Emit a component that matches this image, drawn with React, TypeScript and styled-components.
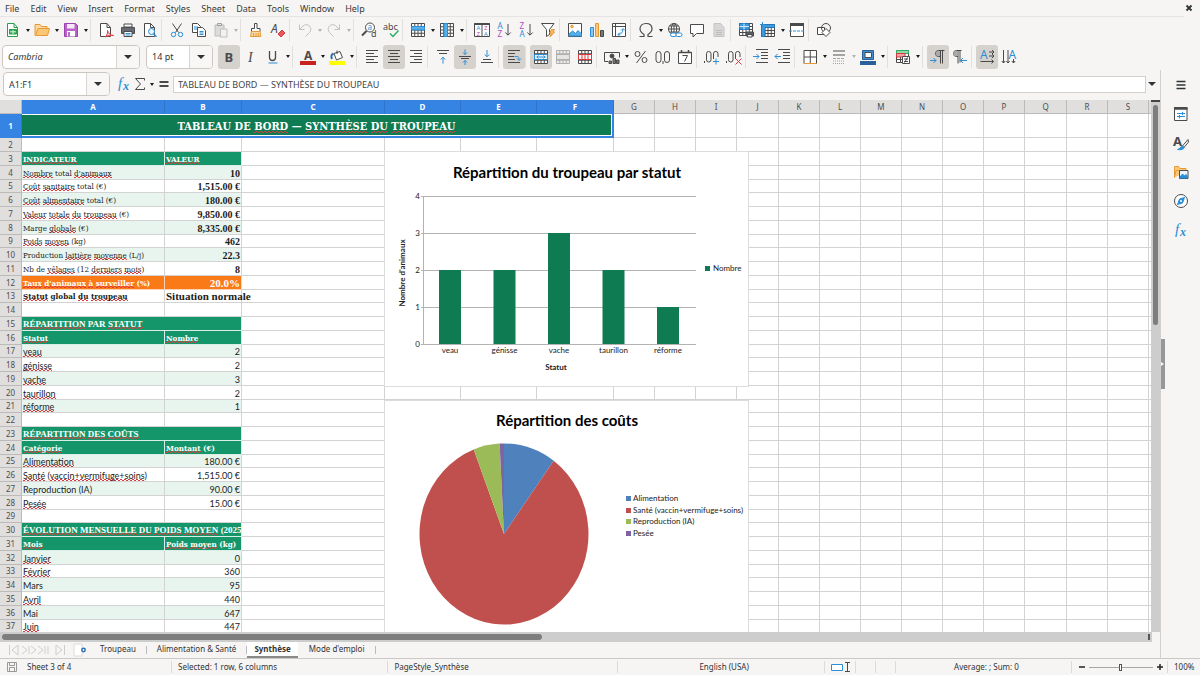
import React from "react";
import styled, { createGlobalStyle, css } from "styled-components";

const UI = `"Noto Sans", "Open Sans", sans-serif`;
const SERIF = `"DejaVu Serif Condensed", "DejaVu Serif", serif`;
const SERIF_NARROW = `"Liberation Serif", serif`;
const SANS = `Lato, "Open Sans", sans-serif`;
const INK = "#4a4a4a";
const BLUE = "#2a8fd6";
const SELECT = "#3584e4";

const GlobalStyle = createGlobalStyle`
  *, *::before, *::after { box-sizing: border-box; }
  body { margin: 0; background: #f6f5f4; font-family: ${UI}; color: #333; }
  button, input { font: inherit; color: inherit; margin: 0; }
`;

/* ---------- shell ---------- */

const Window = styled.div`
  height: 100vh;
  display: flex;
  flex-direction: column;
  overflow: hidden;
  background: #f6f5f4;
`;

const MenuBar = styled.nav`
  display: flex;
  align-items: center;
  height: 17px;
  flex: none;
  margin-right: 16px;
  border-bottom: 1px solid #e6e4e2;
`;

const MenuItem = styled.button`
  border: 0;
  background: none;
  padding: 1px 6px 0 5px;
  font-size: 9px;
  line-height: 15px;
  color: #3a3a3a;
`;

const CloseButton = styled.button`
  position: absolute;
  top: 0;
  right: 4px;
  width: 14px;
  height: 16px;
  padding: 0;
  border: 0;
  background: none;
  display: grid;
  place-items: center;
`;

const Toolbar = styled.div<{ $height: number }>`
  display: flex;
  align-items: center;
  height: ${(p) => p.$height}px;
  padding-left: 2px;
  flex: none;
`;

const Tool = styled.button<{ $on?: boolean }>`
  width: 22px;
  height: 24px;
  flex: none;
  padding: 0;
  border: 0;
  border-radius: 3px;
  display: grid;
  place-items: center;
  background: ${(p) => (p.$on ? "#d5d1cd" : "none")};
`;

const Arrow = styled.button<{ $faded?: boolean }>`
  width: 7px;
  height: 22px;
  flex: none;
  padding: 0;
  border: 0;
  background: none;
  display: grid;
  place-items: center;
  opacity: ${(p) => (p.$faded ? 0.3 : 1)};
  &::before {
    content: "";
    border: 2px solid transparent;
    border-top: 3px solid #1c1c1c;
    border-bottom: 0;
  }
`;

const Separator = styled.span`
  flex: none;
  width: 5px;
  height: 22px;
  border-left: 1px solid #e2e0dd;
  ${Arrow} + & {
    margin-left: 1px;
  }
`;

const Combo = styled.div<{ $width: number; $gap?: number }>`
  display: flex;
  flex: none;
  width: ${(p) => p.$width}px;
  height: 24px;
  margin: 0 ${(p) => p.$gap ?? 6}px 0 0;
  border: 1px solid #cdc7c2;
  border-radius: 4px;
  background: #fff;
  overflow: hidden;
`;

const ComboInput = styled.input<{ $italic?: boolean }>`
  flex: 1;
  min-width: 0;
  border: 0;
  outline: 0;
  padding: 0 5px;
  background: none;
  font-size: 9px;
  font-style: ${(p) => (p.$italic ? "italic" : "normal")};
`;

const ComboButton = styled.button`
  width: 23px;
  border: 0;
  border-left: 1px solid #d8d4d0;
  background: #f8f7f6;
  padding: 0;
  display: grid;
  place-items: center;
  &::before {
    content: "";
    border: 4px solid transparent;
    border-top-color: #2e3436;
    border-bottom: 0;
  }
`;

const Body = styled.div`
  flex: 1;
  min-height: 0;
  display: flex;
`;

const Main = styled.main`
  flex: 1;
  min-width: 0;
  display: flex;
  flex-direction: column;
  border-right: 1px solid #d2d0ce;
`;

const FormulaBar = styled.div`
  display: flex;
  align-items: center;
  height: 30px;
  flex: none;
  padding: 0 3px 2px 3px;
`;

const FormulaTool = styled.button<{ $width: number }>`
  width: ${(p) => p.$width}px;
  height: 20px;
  padding: 0;
  border: 0;
  background: none;
  display: grid;
  place-items: center;
`;

const FormulaInput = styled.input`
  flex: 1;
  min-width: 0;
  height: 17px;
  border: 1px solid #d2d0ce;
  padding: 0 4px;
  background: #fff;
  outline: 0;
  font-size: 9px;
  color: #444;
`;

const ExpandButton = styled(ComboButton)`
  width: 11px;
  border: 0;
  background: none;
`;

/* ---------- sheet ---------- */

const SheetArea = styled.div`
  flex: 1;
  min-height: 0;
  display: flex;
`;

const Canvas = styled.div`
  position: relative;
  flex: 1;
  min-width: 0;
  overflow: hidden;
  background: #fff;
`;

const Grid = styled.table`
  table-layout: fixed;
  width: 100%;
  min-width: 1152px;
  border-collapse: separate;
  border-spacing: 0;
`;

const ColHead = styled.th<{ $selected?: boolean }>`
  height: 14px;
  padding: 0;
  border-right: 1px solid ${(p) => (p.$selected ? "#2f74c8" : "#bdbbb9")};
  border-bottom: 1px solid ${(p) => (p.$selected ? SELECT : "#bdbbb9")};
  background: ${(p) => (p.$selected ? SELECT : "#e0dfde")};
  color: ${(p) => (p.$selected ? "#fff" : "#4d4d4d")};
  font-size: 8px;
  line-height: 12px;
  font-weight: ${(p) => (p.$selected ? 700 : 400)};
`;

const RowHead = styled(ColHead)`
  height: auto;
  vertical-align: middle;
`;

const Row = styled.tr`
  height: 14px;
  &:nth-child(4n + 1) {
    height: 13px;
  }
  &:first-child {
    height: 24px;
  }
`;

type Look = "serif" | "section" | "head" | "alert" | "strong" | "plain" | "amount";

const looks = {
  plain: css`
    font-family: ${SANS};
    font-size: 9px;
  `,
  serif: css`
    font-family: ${SERIF};
    font-size: 8px;
  `,
  amount: css`
    font-family: ${SERIF_NARROW};
    font-size: 10px;
    font-weight: 700;
  `,
  section: css`
    font-family: ${SERIF_NARROW};
    font-size: 9px;
    font-weight: 700;
  `,
  head: css`
    font-family: ${SERIF};
    font-size: 8px;
    font-weight: 700;
  `,
  alert: css`
    font-family: ${SERIF};
    font-size: 8px;
    font-weight: 700;
  `,
  strong: css`
    font-family: ${SERIF};
    font-size: 8px;
    font-weight: 700;
  `,
};

const Cell = styled.td<{ $look?: Look; $fill?: string; $right?: boolean; $big?: boolean; $light?: boolean; $edge?: string }>`
  padding: 1px 1px 0 1px;
  border-right: 1px solid ${(p) => p.$edge ?? "#d3d3d3"};
  border-bottom: 1px solid ${(p) => p.$edge ?? "#d3d3d3"};
  color: ${(p) => (p.$light ? "#fff" : "#1c1c1c")};
  line-height: 11px;
  vertical-align: bottom;
  white-space: nowrap;
  ${(p) => looks[p.$look ?? "plain"]}
  text-align: ${(p) => (p.$right ? "right" : "left")};
  ${(p) => p.$fill && `background: ${p.$fill};`}
  ${(p) => p.$big && "font-size: 11px;"}
  ${(p) => p.$look === "section" && "overflow: hidden;"}
`;

const TitleCell = styled.td`
  padding: 1px 1px 1px 0;
  border-right: 2px solid ${SELECT};
  border-bottom: 2px solid ${SELECT};
`;

const TitleFill = styled.div`
  height: 20px;
  background: #0f7b53;
  color: #fff;
  text-align: center;
  font-family: ${SERIF};
  font-size: 11px;
  font-weight: 700;
  line-height: 24px;
`;

/* Two-pixel-high stepped wave under a word */
const Misspelt = styled.span`
  background:
    linear-gradient(90deg, #dd3b3b 50%, transparent 50%) 0 100% / 4px 1px repeat-x,
    linear-gradient(90deg, transparent 50%, #dd3b3b 50%) 0 calc(100% - 1px) / 4px 1px repeat-x;
`;

const Floating = styled.figure<{ $top: number }>`
  position: absolute;
  left: 384px;
  top: ${(p) => p.$top}px;
  margin: 0;
  width: 365px;
  height: 236px;
  border: 1px solid #dcdcdc;
  background: #fff;
  svg {
    display: block;
    margin: -1px;
  }
`;

const ScrollV = styled.div`
  width: 9px;
  flex: none;
  background: #cdcdcd;
  border-top: 2px solid #444;
  padding: 3px 2px;
`;

const ThumbV = styled.div`
  height: 42%;
  border-radius: 3px;
  background: #7d7d7d;
`;

const ScrollH = styled.div`
  height: 10px;
  flex: none;
  margin-right: 8px;
  background: #cdcdcd;
  padding: 2px;
  display: flex;
  justify-content: space-between;
  &::after {
    content: "";
    width: 2px;
    background: #555;
  }
`;

const ThumbH = styled.div`
  width: 47%;
  border-radius: 3px;
  background: #7d7d7d;
`;

const TabBar = styled.div`
  display: flex;
  align-items: stretch;
  height: 16px;
  flex: none;
  padding-left: 6px;
`;

const TabTool = styled.button<{ $width: number }>`
  width: ${(p) => p.$width}px;
  padding: 0;
  border: 0;
  background: none;
  display: grid;
  place-items: center;
`;

const Tab = styled.button<{ $active?: boolean }>`
  position: relative;
  border: 0;
  padding: 0 ${(p) => (p.$active ? 7 : 10)}px;
  margin-right: 1px;
  background: ${(p) => (p.$active ? "#fff" : "none")};
  border-bottom: 2px solid ${(p) => (p.$active ? "#8a8a8a" : "transparent")};
  font-size: 8px;
  line-height: 14px;
  font-weight: ${(p) => (p.$active ? 700 : 400)};
  &::after {
    content: "";
    position: absolute;
    right: -1px;
    top: 4px;
    height: 8px;
    border-right: 1px solid ${(p) => (p.$active ? "transparent" : "#bbb")};
  }
`;

const SideBar = styled.aside`
  position: relative;
  width: 39px;
  flex: none;
  display: flex;
  flex-direction: column;
  align-items: center;
  gap: 9px;
  padding: 5px 0 0 1px;
`;

const Handle = styled.button`
  position: absolute;
  left: 0;
  top: 269px;
  width: 4px;
  height: 50px;
  padding: 0;
  border: 0;
  background: #979797;
  &::before {
    content: "";
    display: block;
    width: 0;
    border: 2px solid transparent;
    border-left: 3px solid #fff;
    border-right: 0;
  }
`;

const StatusBar = styled.footer`
  display: flex;
  align-items: center;
  height: 17px;
  flex: none;
  border-top: 1px solid #cbc9c7;
  font-size: 8px;
  line-height: 16px;
  color: #333;
`;

const Field = styled.div<{ $grow?: number; $width?: number; $center?: boolean }>`
  flex: ${(p) => (p.$grow ? `${p.$grow} 1 0` : `0 0 ${p.$width}px`)};
  height: 12px;
  line-height: 12px;
  padding-left: 6px;
  border-right: 1px solid #dddbd9;
  display: flex;
  align-items: center;
  justify-content: ${(p) => (p.$center ? "center" : "flex-start")};
  gap: 3px;
  white-space: nowrap;
  &:last-child {
    border-right: 0;
  }
`;

const SheetCount = styled.span`
  padding-left: 6px;
`;

const ZoomButton = styled.button`
  width: 8px;
  height: 12px;
  padding: 0;
  border: 0;
  background: none;
  display: grid;
  place-items: center;
`;

const ZoomSlider = styled.input`
  appearance: none;
  width: 64px;
  height: 9px;
  background: linear-gradient(#a9a7a5, #a9a7a5) center / 100% 1px no-repeat;
  &::-webkit-slider-thumb {
    appearance: none;
    width: 3px;
    height: 7px;
    border: 1px solid #555;
    background: #fff;
  }
`;

/* ---------- icons ---------- */

const Svg = ({ children, w = 16, h = 16 }: { children: React.ReactNode; w?: number; h?: number }) => (
  <svg width={w} height={h} viewBox={`0 0 ${w} ${h}`} overflow="visible" fill="none" stroke={INK} strokeWidth="1" aria-hidden="true">
    {children}
  </svg>
);

const gridLines = (x: number, y: number, w: number, h: number, cols: number, rows: number) => {
  let d = `M${x} ${y}h${w}v${h}h${-w}z`;
  for (let i = 1; i < cols; i++) d += `M${x + (w * i) / cols} ${y}v${h}`;
  for (let i = 1; i < rows; i++) d += `M${x} ${y + (h * i) / rows}h${w}`;
  return d;
};

const Glyph = (p: { x: number; y: number; s: number; c?: string; children: string; b?: boolean; i?: boolean; f?: string }) => (
  <text
    x={p.x}
    y={p.y}
    fontSize={p.s}
    fill={p.c ?? INK}
    stroke="none"
    fontFamily={p.f ?? "Noto Sans, sans-serif"}
    fontWeight={p.b ? 700 : 400}
    fontStyle={p.i ? "italic" : "normal"}
  >
    {p.children}
  </text>
);

const hLines = (rows: [number, number, number][]) => rows.map(([x, y, w]) => `M${x} ${y}h${w}`).join("");

const icons: Record<string, React.ReactNode> = {
  new: (
    <>
      <path d="M2.500 1.500h6.500l3.500 4v9h-10z" fill="#fff" stroke="#27a04b" />
      <path d="M9 1.500v4h3.500" stroke="#27a04b" />
      <path d="M4.500 7.500h7v4.500h-7z" fill="#35a854" stroke="#27a04b" />
      <path d="M5 9.800h6M8 8v4" stroke="#d8f3df" />
    </>
  ),
  open: (
    <>
      <path d="M1 13.500v-11h5l1.500 2H13v3" fill="#fbd9a0" stroke="#e59a35" />
      <path d="M1.500 13.500L4 6.500h11.500l-2 7z" fill="#fcc777" stroke="#e59a35" />
    </>
  ),
  save: (
    <>
      <path d="M1.500 1.500h11l2 2v11h-13z" fill="#b964c8" stroke="#9a42ad" />
      <path d="M4 2h7.500v4.500H4z" fill="#f7e9fa" stroke="none" />
      <path d="M4 9h8v5.500H4z" fill="#fff" stroke="none" />
      <path d="M6 10v4.500" stroke="#9a42ad" strokeWidth="1.500" />
    </>
  ),
  pdf: (
    <>
      <path d="M2.500 1.500h6.500l3.500 4v9h-10z" fill="#fff" />
      <path d="M9 1.500v4h3.500" />
      <path d="M7.500 15c2-3 2.500-5 2-6.500c1 3 3 5 6 5c-3-.5-5.500 0-8 1.500z" stroke="#e0393e" fill="#fbd5d6" />
    </>
  ),
  print: (
    <>
      <path d="M4 2h8v3H4z" fill="#fff" />
      <path d="M1.500 5.500h13v6h-13z" fill="#666c72" stroke="#4b5157" />
      <path d="M4 9.500h8v5H4z" fill="#fff" />
      <path d="M5.500 11.500h5M5.500 13h5" stroke={BLUE} />
    </>
  ),
  preview: (
    <>
      <path d="M2.500 1.500h6l4 4v9h-10z" fill="#fff" />
      <path d="M8.500 1.500v4h4" />
      <circle cx="9.500" cy="9.500" r="3" fill="#eaf5fc" stroke={BLUE} />
      <path d="M11.500 11.800l3 3" stroke={BLUE} strokeWidth="1.500" />
    </>
  ),
  cut: (
    <>
      <path d="M3.500 1.500l6 9M12.500 1.500l-6 9" />
      <circle cx="4.500" cy="12.500" r="2.200" stroke={BLUE} />
      <circle cx="11.500" cy="12.500" r="2.200" stroke={BLUE} />
    </>
  ),
  copy: (
    <>
      <path d="M1.500 1.500h5l3 3v6h-8z" fill="#fff" />
      <path d="M3 5h4M3 7h4" stroke={BLUE} />
      <path d="M6.500 5.500h5l3 3v6h-8z" fill="#fff" />
      <path d="M8.500 9.500h4M8.500 11h4M8.500 12.500h4" stroke={BLUE} />
    </>
  ),
  paste: (
    <g opacity=".5">
      <path d="M2 3h9v11H2z" fill="#c4c4c4" stroke="#8a8a8a" />
      <path d="M4.500 1.500h4v2h-4z" fill="#ddd" />
      <path d="M7.500 7h6.500v8H7.500z" fill="#eee" stroke="#8a8a8a" />
    </g>
  ),
  brush: (
    <>
      <path d="M6.500 1.500h2.500v5h3v3H3.500v-3h3z" fill="#fff" />
      <path d="M3.500 9.500h8.500l.8 5H2.500z" fill="#fbd9a0" stroke="#e59a35" />
      <path d="M5.500 11v3M8 11v3M10.300 11v3" stroke="#e59a35" />
    </>
  ),
  clear: (
    <>
      <Glyph x={1} y={11} s={12} i>A</Glyph>
      <path d="M8 12l4-4 3 3-4 4z" fill="#e8575c" stroke="#d33a40" />
    </>
  ),
  undo: <path d="M2.500 2.500v5h5M2.500 7.500l3.500-3.500a4.500 4.500 0 0 1 6.500 6.500l-4 4" stroke="#c4c2c0" />,
  redo: <path d="M13.500 2.500v5h-5M13.500 7.500L10 4a4.500 4.500 0 0 0-6.500 6.500l4 4" stroke="#c4c2c0" />,
  find: (
    <>
      <circle cx="9" cy="5.500" r="4.500" fill="#fff" />
      <Glyph x={6.500} y={8} s={8} c={BLUE}>a</Glyph>
      <path d="M5.500 9L1 13.500" strokeWidth="2" />
      <Glyph x={10} y={15} s={9}>d</Glyph>
    </>
  ),
  spell: (
    <>
      <Glyph x={0} y={7.500} s={9}>abc</Glyph>
      <path d="M7 11.500l3 3 5.500-6" stroke="#2fae63" strokeWidth="1.500" />
    </>
  ),
  row: (
    <>
      <path d={gridLines(1.500, 1.500, 13, 13, 4, 4)} fill="#fff" />
      <path d="M1.500 4.500h13v3.500h-13z" fill="#58aee6" stroke={BLUE} />
    </>
  ),
  col: (
    <>
      <path d={gridLines(1.500, 1.500, 13, 13, 4, 4)} fill="#fff" />
      <path d="M5 1.500h3.500v13H5z" fill="#58aee6" stroke={BLUE} />
    </>
  ),
  sort: (
    <>
      <path d="M.5 1.500h15v13H.5z M8 1.500v13" fill="#fff" />
      <path d="M.5 2h15" strokeWidth="2" />
      <Glyph x={2.500} y={8} s={6} c={BLUE}>A</Glyph>
      <Glyph x={2.500} y={14} s={6} c="#b04cc0">Z</Glyph>
      <Glyph x={10} y={8} s={6} c="#b04cc0">Z</Glyph>
      <Glyph x={10} y={14} s={6} c={BLUE}>A</Glyph>
    </>
  ),
  az: (
    <>
      <Glyph x={1.500} y={7} s={8} c={BLUE}>A</Glyph>
      <Glyph x={1.500} y={15} s={8} c="#b04cc0">Z</Glyph>
      <path d="M12 2v11M9.300 10.500l2.700 2.700 2.700-2.700" />
    </>
  ),
  za: (
    <>
      <Glyph x={1.500} y={7} s={8} c="#b04cc0">Z</Glyph>
      <Glyph x={1.500} y={15} s={8} c={BLUE}>A</Glyph>
      <path d="M12 2v11M9.300 10.500l2.700 2.700 2.700-2.700" />
    </>
  ),
  filter: (
    <>
      <path d="M1.500 1.500h12.500L9.500 7.500v5l-3 2v-7z" fill="#fff" />
      <path d="M11.500 7.500h3l-1.500 2.500h1.500l-4.500 5 1.200-4h-1.500z" fill="#fbb765" stroke="#e59a35" />
    </>
  ),
  image: (
    <>
      <path d="M1.500 1.500h13v13h-13z" fill="#fff" />
      <path d="M2 12l3.500-3 3 2.500 2.500-3 3.500 3.500V14H2z" fill="#58aee6" stroke={BLUE} />
      <circle cx="5" cy="4.500" r="1.300" fill="#fbb765" stroke="#e59a35" />
    </>
  ),
  chart: (
    <>
      <path d="M1.500 5.500h3v9h-3z" fill="#8cc8f0" stroke={BLUE} />
      <path d="M6.500 1.500h3v13h-3z" fill="#fcc777" stroke="#e59a35" />
      <path d="M11.500 8.500h3v6h-3z" fill="#777" />
    </>
  ),
  pivot: (
    <>
      <path d="M1.500 1.500h13v13h-13zM1.500 4.500h13M4.500 1.500v13" fill="#fff" />
      <path d="M7 12.500c3 0 5-2 5-5.500M10 8.500l2-2 2 2M9 10.500l-2 2 2 2" stroke={BLUE} />
    </>
  ),
  omega: (
    <path
      d="M1.500 14.500h4.500v-2C3.500 11 2 9.500 2 6.800C2 3.500 4.500 1.500 8 1.500s6 2 6 5.300c0 2.700-1.500 4.200-4 5.700v2h4.500"
      strokeWidth="1.200"
    />
  ),
  globe: (
    <>
      <circle cx="7" cy="7" r="5.500" fill="#fff" />
      <path d="M1.500 7h11M7 1.500v11M2.500 4h9M2.500 10h9" />
      <ellipse cx="7" cy="7" rx="2.700" ry="5.500" />
      <rect x="3.500" y="11" width="6" height="3.500" rx="1.700" fill="#fff" stroke={BLUE} />
      <rect x="9" y="11" width="6" height="3.500" rx="1.700" fill="#fff" stroke={BLUE} />
    </>
  ),
  comment: <path d="M1.500 2.500h13v9H7.500l-3.500 3.500v-3.500H1.500z" fill="#fff" />,
  header: (
    <g opacity=".6">
      <path d="M3 1.500h6.500l3.500 4v9H3z" fill="#c4c4c4" stroke="#a5a5a5" />
      <path d="M5 8.500h6M5 10.500h6M5 12.500h6" stroke="#999" />
    </g>
  ),
  printRange: (
    <>
      <path d={gridLines(1.500, 1.500, 13, 12, 4, 4)} fill="#fff" />
      <path d="M1.500 1.500h9.500v6h-9.500z" fill="#3f9bdc" stroke="#2576b8" />
      <path d="M1.500 4.500h9.500M6 1.500v6" stroke="#cfe8f8" />
      <path d="M8 10h7.500v4H8z" fill="#5a6066" />
      <path d="M9.500 12.500h4.500v2.500H9.500z" fill="#fff" />
    </>
  ),
  freeze: (
    <>
      <path d={gridLines(1.500, 2.500, 13, 12, 4, 4)} fill="#fff" />
      <path d="M1.500 2.500h13v3H5v9H1.500z" fill="#3f9bdc" stroke="#2576b8" />
      <path d="M2.500 0v5M0 2.500h5" stroke={BLUE} />
    </>
  ),
  split: (
    <>
      <path d="M1.500 2.500h13v12h-13z" fill="#fff" />
      <path d="M1 2.500h14" strokeWidth="3" />
      <path d="M0 9h16" stroke={BLUE} strokeDasharray="3 1" />
    </>
  ),
  shapes: (
    <>
      <path d="M1.500 5.500h7v7h-7z" fill="#fff" />
      <circle cx="10" cy="6" r="4.500" />
      <path d="M10 6.500l4 4-4 4-4-4z" fill="#fff" />
    </>
  ),
  bold: <Glyph x={3.500} y={12.500} s={13} b>B</Glyph>,
  italic: <Glyph x={5} y={12.500} s={14} i f="Liberation Serif, serif">I</Glyph>,
  underline: (
    <>
      <path d="M4.500 2v6.500a3 3 0 0 0 6 0V2" strokeWidth="1.300" />
      <path d="M3.500 14h9" stroke={BLUE} />
    </>
  ),
  fontColor: (
    <>
      <Glyph x={4} y={10.500} s={12} b>A</Glyph>
      <path d="M0 14h16" stroke="#c9211e" strokeWidth="4" />
    </>
  ),
  fill: (
    <>
      <path d="M5 4.500l6-2 2.500 6-6 2.500z" fill="#fff" />
      <path d="M8 5V1.500" />
      <path d="M4.500 4.500C2 5.500 2 8 3 10" stroke="#2a6fb0" strokeWidth="2" />
      <path d="M0 14h16" stroke="#ff0" strokeWidth="4" />
    </>
  ),
  left: <path d={hLines([[2, 1.500, 12], [2, 4.500, 8], [2, 7.500, 12], [2, 10.500, 8], [2, 13.500, 12]])} />,
  center: <path d={hLines([[2, 1.500, 12], [4, 4.500, 8], [2, 7.500, 12], [4, 10.500, 8], [2, 13.500, 12]])} />,
  right: <path d={hLines([[2, 1.500, 12], [6, 4.500, 8], [2, 7.500, 12], [6, 10.500, 8], [2, 13.500, 12]])} />,
  top: (
    <>
      <path d="M2 1.500h12M4 4.500h8" />
      <path d="M8 14.500v-6M5.700 10.500L8 8.200l2.300 2.300" stroke={BLUE} />
    </>
  ),
  middle: (
    <>
      <path d="M2 7.500h12M4 9.500h8" />
      <path d="M8 .5v5M6 3.500l2 2 2-2M8 16v-4.500M6 13.500l2-2 2 2" stroke={BLUE} />
    </>
  ),
  bottom: (
    <>
      <path d="M4 10.500h8M2 13.500h12" />
      <path d="M8 1v6.500M5.700 5.500L8 7.800l2.300-2.300" stroke={BLUE} />
    </>
  ),
  wrap: (
    <>
      <path d="M2 1.500h12M2 4.500h7M2 7.500h6M2 10.500h7M2 13.500h12" />
      <path d="M8.500 7.500h3c1 0 1.500 1 1.500 3.500M11 9.500l2 2 2-2" stroke={BLUE} />
    </>
  ),
  merge: (
    <>
      <path d={gridLines(1.500, 1.500, 13, 13, 4, 4)} fill="#fff" />
      <path d="M1.500 5.500h13v5h-13z" fill="#e6f3fc" stroke={BLUE} />
      <path d="M3.500 8h9M5.500 6.500L4 8l1.500 1.500M10.500 6.500L12 8l-1.500 1.500" stroke={BLUE} />
    </>
  ),
  mergeOff: (
    <g opacity=".4">
      <path d={gridLines(1.500, 1.500, 13, 13, 4, 4)} fill="#ddd" />
      <path d="M1.500 5.500h13v5h-13z" fill="#ccc" />
    </g>
  ),
  unmerge: (
    <>
      <path d={gridLines(1.500, 1.500, 13, 13, 4, 4)} fill="#fff" />
      <path d="M1.500 5.500h13v5h-13zM5 5.500v5M8 5.500v5M11 5.500v5" fill="#fff" stroke="#e0393e" />
    </>
  ),
  currency: (
    <>
      <path d="M4 12.500H.5v-9h15v5" />
      <circle cx="8" cy="7" r="2" fill={INK} />
      <path d="M5 12h2.500v2.500H5zM9 9.500h2.500v5H9zM12.500 11H15v3.500h-2.500z" fill="#777" />
    </>
  ),
  percent: (
    <>
      <circle cx="4.500" cy="5" r="2.500" />
      <circle cx="11.500" cy="11" r="2.500" />
      <path d="M12.500 2l-9 12" />
    </>
  ),
  number: (
    <>
      <rect x="1" y="2.500" width="5" height="11" rx="2.500" />
      <rect x="9.500" y="2.500" width="5" height="11" rx="2.500" />
      <path d="M8 12v3" />
    </>
  ),
  date: (
    <>
      <path d="M1.500 3.500h13v11h-13z" fill="#fff" />
      <path d="M1.500 3.500h13M4.500 1v3M11.500 1v3" strokeWidth="1.500" />
      <path d="M5.500 6.500h5l-3 6" />
    </>
  ),
  addDecimal: (
    <>
      <path d="M.5 12v2" />
      <rect x="2.500" y="2.500" width="4.500" height="10.500" rx="2.200" />
      <path d="M9.500 10V4.700a2.200 2.200 0 0 1 4.500 0V8" />
      <path d="M9 12.500h6M12 9.500v6" stroke={BLUE} />
    </>
  ),
  delDecimal: (
    <>
      <path d="M.5 12v2" />
      <rect x="2.500" y="2.500" width="4.500" height="10.500" rx="2.200" />
      <path d="M9.500 10V4.700a2.200 2.200 0 0 1 4.500 0V8" />
      <path d="M9.500 9.500l6 6M15.500 9.500l-6 6" stroke="#e0393e" />
    </>
  ),
  indent: (
    <>
      <path d="M3 .5h12M8 3.500h7M8 6.500h7M8 9.500h7M3 13.500h12" />
      <path d="M0 7.500h6M3.500 5L6 7.500 3.500 10" stroke={BLUE} />
    </>
  ),
  outdent: (
    <>
      <path d="M3 .5h12M8 3.500h7M8 6.500h7M8 9.500h7M3 13.500h12" />
      <path d="M0 7.500h6M2.500 5L0 7.500 2.500 10" stroke={BLUE} />
    </>
  ),
  borders: (
    <>
      <path d="M2 1.500h12.500v13H2zM8.250 1.500v13M2 8h12.500" fill="#fff" />
      <path d="M2 14.500h12.500" stroke="#e59a35" />
    </>
  ),
  borderStyle: (
    <g stroke="#a5a3a1">
      <path d="M2 2h12M2 6h12" strokeWidth="2" />
      <path d="M2 9.500h12" strokeDasharray="3 1" />
      <path d="M2 12h12M2 14.500h12" strokeDasharray="1 1" />
    </g>
  ),
  borderColor: (
    <>
      <path d="M2.500 1.500h11v9h-11z" fill="#3f8fd0" stroke="#2a6099" />
      <path d="M5 3.500h6.500v5H5z" fill="#fff" />
      <path d="M0 14h16" stroke="#2a6099" strokeWidth="4" />
    </>
  ),
  conditional: (
    <>
      <path d={gridLines(1.500, 1.500, 12, 12, 3, 4)} fill="#fff" />
      <path d="M1.500 1.500h12v3h-12z" fill="#8fdba4" stroke="#2fae63" />
      <path d="M1.500 4.500H10v3.500H1.500z" fill="#f2a0a2" stroke="#d33a40" />
      <path d="M7.500 7.500h7v7h-7z" fill="#fff" />
      <path d="M9 10h4M9 12.500h4M12.500 8.500l-3 5" />
    </>
  ),
  ltr: (
    <>
      <path d="M14.500 1.500H8.500a3 3 0 0 0 0 6H10M10.500 1.500v13M12.500 1.500v13" />
      <path d="M8.500 2a2.500 2.500 0 0 0 0 5h1.500v-5z" fill="#aaa" stroke="none" />
      <path d="M0 11.500h6M3.500 9L6 11.500 3.500 14" stroke={BLUE} />
    </>
  ),
  rtl: (
    <>
      <path d="M9.500 1.500H4.500a3 3 0 0 0 0 6H6M6 1.500v13M8 1.500v12" />
      <path d="M4 2a2.500 2.500 0 0 0 0 5h1.500v-5z" fill="#aaa" stroke="none" />
      <path d="M8.500 11.500h6.500M11 9l-2.500 2.500L11 14" stroke={BLUE} />
    </>
  ),
  textH: (
    <>
      <Glyph x={1} y={9.500} s={12} c={BLUE}>A</Glyph>
      <path d="M10 3h4.500M10 7h4.500M1.500 12.500h13M13 1l2 2-2 2M13 5l2 2-2 2M12.500 10.500l2 2-2 2" />
    </>
  ),
  textV: (
    <>
      <Glyph x={7.500} y={9.500} s={12} c={BLUE}>A</Glyph>
      <path d="M2.500 1v13M7 1v13M12.500 10v4M.8 12l1.700 2 1.700-2M5.300 12L7 14l1.700-2M10.800 12l1.700 2 1.700-2" />
    </>
  ),
  fx: (
    <>
      <Glyph x={2} y={12} s={15} c={BLUE} i f="Liberation Serif, serif">f</Glyph>
      <Glyph x={7} y={14} s={12} c={BLUE} i b f="Liberation Serif, serif">x</Glyph>
    </>
  ),
  sigma: <path d="M12.500 4.500V2.500h-9l5 5.500-5 5.500h9v-2" />,
  equals: <path d="M3.500 6h9M3.500 10h9" strokeWidth="2" />,
  menu: <path d="M3.500 4.500h9M3.500 8h9M3.500 11.500h9" stroke="#2e3436" strokeWidth="1.500" />,
  properties: (
    <>
      <path d="M1.500 1.500h12.500v13H1.500z" fill="#fff" />
      <path d="M1 2.500h13.500" strokeWidth="2.500" />
      <path d="M4 7.500h8M4 10.500h8M9.500 5.800v3.400M6.500 9v3.400" stroke={BLUE} />
    </>
  ),
  styles: (
    <>
      <Glyph x={0} y={11} s={13} b>A</Glyph>
      <path d="M15 4.500L9.500 11l1.500 1.500L15.500 7z" fill="#fff" />
      <path d="M9.500 11c-2 0-2 3-5 3.500c3 .5 6.500 0 6.500-2z" fill={BLUE} stroke={BLUE} />
    </>
  ),
  gallery: (
    <>
      <path d="M1.500 13.500v-11h4l1.500 2h6v2" fill="#fcc777" stroke="#e59a35" />
      <path d="M1.500 13.500L3 6.500h12" fill="#fcc777" stroke="#e59a35" />
      <path d="M6.500 6.500h8.500v8H6.500z" fill="#eaf5fc" />
      <path d="M7 13l2.500-3 2 2 1.500-1.500 1.500 2v1.500H7z" fill={BLUE} stroke={BLUE} />
    </>
  ),
  navigator: (
    <>
      <circle cx="8" cy="8" r="6.500" fill="#fff" />
      <path d="M11.500 4.500l-2 5.500-5 1.500 2-5.500z" fill={BLUE} stroke={BLUE} />
      <circle cx="8" cy="8" r="1" fill="#fff" stroke="none" />
    </>
  ),
};

const Icon = ({ name }: { name: string }) => <Svg>{icons[name]}</Svg>;

/* ---------- data ---------- */

const menus = ["File", "Edit", "View", "Insert", "Format", "Styles", "Sheet", "Data", "Tools", "Window", "Help"];

/* "|" separator, ">" drop-down arrow, ")" disabled arrow, "*" prefix marks a pressed button */
const standardBar =
  "new > open > save > | pdf print preview | cut copy paste ) | brush clear | undo ) redo ) | find spell | row > col > | sort az za filter | image chart pivot | omega > globe comment header | printRange freeze > split | shapes";
const formatBar =
  "*bold italic underline > | fontColor > fill > | left *center right | top *middle bottom | *wrap | *merge mergeOff unmerge | currency > percent number date | addDecimal delDecimal | indent outdent | borders > borderStyle ) borderColor > | conditional > | *ltr rtl | *textH textV";

const Tools = ({ layout }: { layout: string }) => (
  <>
    {layout.split(" ").map((t, i) => {
      if (t === "|") return <Separator key={i} />;
      if (t === ">" || t === ")") return <Arrow key={i} $faded={t === ")"} aria-label="Options" />;
      const on = t.startsWith("*");
      const name = on ? t.slice(1) : t;
      return (
        <Tool key={i} $on={on} aria-label={name} aria-pressed={on}>
          <Icon name={name} />
        </Tool>
      );
    })}
  </>
);

const columns = "ABCDEFGHIJKLMNOPQRS".split("");
const columnWidths = [143, 77, 143, 76, 76, 77, 41, 41, 41, 42, 41, 41, 41, 41, 41, 41, 42, 41, 41];

const GREEN = "#15966a";
const MINT = "#e8f5ef";
const ORANGE = "#fb7a18";

type RowData = { a: string; b?: string; look: Look; bLook?: Look; fill?: string; left?: boolean };

/* Words between tildes are flagged by the spell checker. */
const rows: Record<number, RowData> = {
  3: { a: "~INDICATEUR~", b: "~VALEUR~", look: "head", fill: GREEN, left: true },
  4: { a: "~Nombre~ total ~d'animaux~", b: "10", look: "serif", bLook: "amount", fill: MINT },
  5: { a: "~Coût~ ~sanitaire~ total (€)", b: "1,515.00 €", look: "serif", bLook: "amount" },
  6: { a: "~Coût~ ~alimentaire~ total (€)", b: "180.00 €", look: "serif", bLook: "amount", fill: MINT },
  7: { a: "~Valeur~ ~totale~ ~du~ ~troupeau~ (€)", b: "9,850.00 €", look: "serif", bLook: "amount" },
  8: { a: "Marge ~globale~ (€)", b: "8,335.00 €", look: "serif", bLook: "amount", fill: MINT },
  9: { a: "~Poids~ ~moyen~ (kg)", b: "462", look: "serif", bLook: "amount" },
  10: { a: "Production ~laitière~ ~moyenne~ (L/j)", b: "22.3", look: "serif", bLook: "amount", fill: MINT },
  11: { a: "Nb de ~vêlages~ (12 ~derniers~ ~mois~)", b: "8", look: "serif", bLook: "amount" },
  12: { a: "~Taux~ ~d'animaux~ ~à~ ~surveiller~ (%)", b: "20.0%", look: "alert", bLook: "amount", fill: ORANGE },
  13: { a: "~Statut~ global ~du~ ~troupeau~", b: "Situation normale", look: "strong", bLook: "amount", left: true },
  15: { a: "~RÉPARTITION~ PAR ~STATUT~", look: "section", fill: GREEN },
  16: { a: "~Statut~", b: "~Nombre~", look: "head", fill: GREEN, left: true },
  17: { a: "~veau~", b: "2", look: "plain", fill: MINT },
  18: { a: "~génisse~", b: "2", look: "plain" },
  19: { a: "~vache~", b: "3", look: "plain", fill: MINT },
  20: { a: "~taurillon~", b: "2", look: "plain" },
  21: { a: "~réforme~", b: "1", look: "plain", fill: MINT },
  23: { a: "~RÉPARTITION~ ~DES~ ~COÛTS~", look: "section", fill: GREEN },
  24: { a: "~Catégorie~", b: "~Montant~ (€)", look: "head", fill: GREEN, left: true },
  25: { a: "~Alimentation~", b: "180.00 €", look: "plain", fill: MINT },
  26: { a: "~Santé~ (~vaccin+vermifuge+soins~)", b: "1,515.00 €", look: "plain" },
  27: { a: "Reproduction (IA)", b: "90.00 €", look: "plain", fill: MINT },
  28: { a: "~Pesée~", b: "15.00 €", look: "plain" },
  30: { a: "~ÉVOLUTION~ ~MENSUELLE~ ~DU~ ~POIDS~ ~MOYEN~ (2025)", look: "section", fill: GREEN },
  31: { a: "~Mois~", b: "~Poids~ ~moyen~ (kg)", look: "head", fill: GREEN, left: true },
  32: { a: "~Janvier~", b: "0", look: "plain", fill: MINT },
  33: { a: "~Février~", b: "360", look: "plain" },
  34: { a: "Mars", b: "95", look: "plain", fill: MINT },
  35: { a: "~Avril~", b: "440", look: "plain" },
  36: { a: "Mai", b: "647", look: "plain", fill: MINT },
  37: { a: "~Juin~", b: "447", look: "plain" },
};

const Spelled = ({ text }: { text: string }) => (
  <>{text.split("~").map((part, i) => (i % 2 ? <Misspelt key={i}>{part}</Misspelt> : part))}</>
);

const edges: Partial<Record<Look, string>> = { head: "#d9efe5", section: "#d9efe5", alert: "#fbd3b4" };

const SheetRow = ({ n }: { n: number }) => {
  const r = rows[n];
  const merged = r?.look === "section";
  const edge = r && edges[r.look];
  return (
    <Row>
      <RowHead scope="row" $selected={n === 1}>{n}</RowHead>
      {n === 1 ? (
        <TitleCell colSpan={6}>
          <TitleFill>
            <Spelled text="TABLEAU DE ~BORD~ — ~SYNTHÈSE~ ~DU~ ~TROUPEAU~" />
          </TitleFill>
        </TitleCell>
      ) : (
        <>
          <Cell $look={r?.look} $fill={r?.fill} $light={!!edge} $edge={edge} colSpan={merged ? 2 : 1}>
            {r && <Spelled text={r.a} />}
          </Cell>
          {!merged && (
            <Cell
              $look={r?.bLook ?? r?.look}
              $fill={r?.fill}
              $light={!!edge}
              $edge={edge}
              $big={n === 12 || n === 13}
              $right={!r?.left}
            >
              {r?.b && <Spelled text={r.b} />}
            </Cell>
          )}
          {["C", "D", "E", "F"].map((c) => <Cell key={c} />)}
        </>
      )}
      {columns.slice(6).map((c) => <Cell key={c} />)}
      <Cell />
    </Row>
  );
};

/* ---------- charts ---------- */

const statusBars = [
  { label: "veau", value: 2 },
  { label: "génisse", value: 2 },
  { label: "vache", value: 3 },
  { label: "taurillon", value: 2 },
  { label: "réforme", value: 1 },
];

const BarChart = () => (
  <svg width="365" height="236" viewBox="0 0 365 236" fontFamily={SANS} fontSize="8" fill="#222" role="img" aria-label="Répartition du troupeau par statut">
    <text x="183" y="27" textAnchor="middle" fontSize="15" fontWeight="700" fill="#000">Répartition du troupeau par statut</text>
    {[0, 1, 2, 3, 4].map((v) => (
      <g key={v}>
        <path d={`M37 ${193.500 - v * 37}H312`} stroke="#b3b3b3" />
        <text x="36" y={196 - v * 37} textAnchor="end">{v}</text>
      </g>
    ))}
    <path d="M39.500 45v149" stroke="#b3b3b3" />
    {statusBars.map((b, i) => (
      <g key={b.label}>
        <rect x={55 + i * 54.500} y={193 - b.value * 37} width="22" height={b.value * 37} fill="#0f7b53" />
        <text x={66 + i * 54.500} y="202" textAnchor="middle">{b.label}</text>
      </g>
    ))}
    <text x="172" y="219" textAnchor="middle" fontWeight="700">Statut</text>
    <text transform="translate(21 122) rotate(-90)" textAnchor="middle" fontWeight="700">Nombre d'animaux</text>
    <rect x="321" y="115" width="5" height="5" fill="#0f7b53" />
    <text x="329" y="120">Nombre</text>
  </svg>
);

const costs = [
  { label: "Alimentation", value: 180, color: "#4f81bd" },
  { label: "Santé (vaccin+vermifuge+soins)", value: 1515, color: "#c0504d" },
  { label: "Reproduction (IA)", value: 90, color: "#9bbb59" },
  { label: "Pesée", value: 15, color: "#8064a2" },
];

const PieChart = () => {
  const total = costs.reduce((s, c) => s + c.value, 0);
  const point = (t: number) => `${120 + 84.500 * Math.sin(2 * Math.PI * t)} ${134 - 90.500 * Math.cos(2 * Math.PI * t)}`;
  let from = 0;
  return (
    <svg width="365" height="236" viewBox="0 0 365 236" fontFamily={SANS} fontSize="8" fill="#222" role="img" aria-label="Répartition des coûts">
      <text x="183" y="26" textAnchor="middle" fontSize="15" fontWeight="700" fill="#000">Répartition des coûts</text>
      {costs.map((c, i) => {
        const start = from / total;
        from += c.value;
        const end = from / total;
        return (
          <g key={c.label}>
            <path d={`M120 134L${point(start)}A84.500 90.500 0 ${end - start > 0.5 ? 1 : 0} 1 ${point(end)}z`} fill={c.color} />
            <rect x="242" y={96 + Math.round(i * 11.700)} width="5" height="5" fill={c.color} />
            <text x="249" y={101 + Math.round(i * 11.700)}>{c.label}</text>
          </g>
        );
      })}
    </svg>
  );
};

/* ---------- page ---------- */

export default function App() {
  return (
    <Window>
      <GlobalStyle />
      <MenuBar>
        {menus.map((m) => <MenuItem key={m}>{m}</MenuItem>)}
      </MenuBar>
      <CloseButton aria-label="Close">
        <Svg w={8} h={8}><path d="M1.500 1.500l5 5M6.500 1.500l-5 5" stroke="#2e3436" strokeWidth="1.800" /></Svg>
      </CloseButton>
      <Toolbar $height={26}><Tools layout={standardBar} /></Toolbar>
      <Toolbar $height={27}>
        <Combo $width={138}>
          <ComboInput $italic defaultValue="Cambria" aria-label="Font name" />
          <ComboButton aria-label="Font list" />
        </Combo>
        <Combo $width={67} $gap={5}>
          <ComboInput defaultValue="14 pt" aria-label="Font size" />
          <ComboButton aria-label="Size list" />
        </Combo>
        <Tools layout={formatBar} />
      </Toolbar>
      <Body>
        <Main>
          <FormulaBar>
            <Combo $width={107}>
              <ComboInput defaultValue="A1:F1" aria-label="Name box" />
              <ComboButton aria-label="Named ranges" />
            </Combo>
            <FormulaTool $width={16} aria-label="Function wizard"><Icon name="fx" /></FormulaTool>
            <FormulaTool $width={16} aria-label="Sum"><Icon name="sigma" /></FormulaTool>
            <Arrow aria-label="Function list" />
            <FormulaTool $width={18} aria-label="Formula"><Icon name="equals" /></FormulaTool>
            <FormulaInput defaultValue="TABLEAU DE BORD — SYNTHÈSE DU TROUPEAU" aria-label="Input line" />
            <ExpandButton aria-label="Expand formula bar" />
          </FormulaBar>
          <SheetArea>
            <Canvas>
              <Grid>
                <colgroup>
                  <col style={{ width: 22 }} />
                  {columnWidths.map((w, i) => <col key={i} style={{ width: w }} />)}
                  <col />
                </colgroup>
                <thead>
                  <tr>
                    <ColHead />
                    {columns.map((c, i) => <ColHead key={c} scope="col" $selected={i < 6}>{c}</ColHead>)}
                    <ColHead />
                  </tr>
                </thead>
                <tbody>
                  {Array.from({ length: 60 }, (_, i) => <SheetRow key={i} n={i + 1} />)}
                </tbody>
              </Grid>
              <Floating $top={51}><BarChart /></Floating>
              <Floating $top={300}><PieChart /></Floating>
            </Canvas>
            <ScrollV><ThumbV /></ScrollV>
          </SheetArea>
          <ScrollH><ThumbH /></ScrollH>
          <TabBar>
            <TabTool $width={62} aria-label="Scroll sheets">
              <Svg w={60} h={14}>
                <path
                  d="M2.500 2v10M11 2L5 7l6 5zM22 3v8M15 3l5 4-5 4M24 3l5 4-5 4M31 11l5-4-5-4M38 3v8M41 3v8M49 2l6 5-6 5zM57.500 2v10"
                  stroke="#cfcdcb"
                />
              </Svg>
            </TabTool>
            <TabTool $width={22} aria-label="Add sheet">
              <Svg w={14} h={14}>
                <path d="M2 1h8v12H2z" fill="#fff" stroke="#dcdad8" />
                <circle cx="11.500" cy="7" r="1.700" fill="#fff" stroke="#2a6fb8" strokeWidth="1.500" />
              </Svg>
            </TabTool>
            <Tab>Troupeau</Tab>
            <Tab>Alimentation &amp; Santé</Tab>
            <Tab $active>Synthèse</Tab>
            <Tab>Mode d'emploi</Tab>
          </TabBar>
        </Main>
        <SideBar>
          {["menu", "properties", "styles", "gallery", "navigator", "fx"].map((n) => (
            <FormulaTool key={n} $width={22} aria-label={n}><Icon name={n} /></FormulaTool>
          ))}
          <Handle aria-label="Hide sidebar" />
        </SideBar>
      </Body>
      <StatusBar>
        <Field $width={172}>
          <Svg w={12} h={12}><path d="M1.500 1.500h9v9h-9zM3.500 1.500v3h5v-3M3.500 10.500v-4h5v4" stroke="#999" /></Svg>
          <SheetCount>Sheet 3 of 4</SheetCount>
        </Field>
        <Field $grow={216}>Selected: 1 row, 6 columns</Field>
        <Field $grow={230}>PageStyle_Synthèse</Field>
        <Field $grow={206} $center>English (USA)</Field>
        <Field $width={31}>
          <Svg w={20} h={12}>
            <path d="M.5 3.500h11v6H.5z" stroke={BLUE} fill="#fff" />
            <path d="M14 1.500h5M16.500 1.500v9M14 10.500h5" />
          </Svg>
        </Field>
        <Field $width={20} />
        <Field $width={20} />
        <Field $width={176} $center>Average: ; Sum: 0</Field>
        <Field $width={96}>
          <ZoomButton aria-label="Zoom out"><Svg w={8} h={8}><path d="M1 4h6" stroke="#222" strokeWidth="1.500" /></Svg></ZoomButton>
          <ZoomSlider type="range" min={0} max={100} defaultValue={49} aria-label="Zoom" />
          <ZoomButton aria-label="Zoom in"><Svg w={8} h={8}><path d="M1 4h6M4 1v6" stroke="#222" strokeWidth="1.500" /></Svg></ZoomButton>
        </Field>
        <Field $width={32}>100%</Field>
      </StatusBar>
    </Window>
  );
}
